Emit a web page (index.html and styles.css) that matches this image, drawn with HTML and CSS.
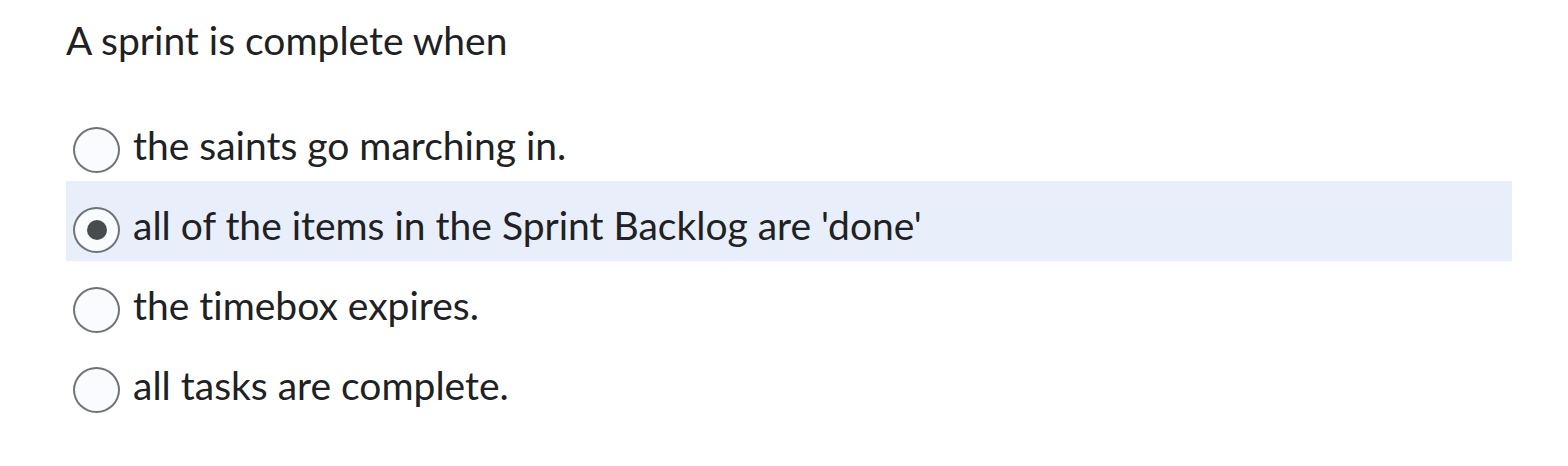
FILE: index.html
```html
<!DOCTYPE html>
<html>
<head>
<meta charset="utf-8">
<link rel="stylesheet" href="styles.css">
</head>
<body>
<div class="question">
  <div class="prompt">A sprint is complete when</div>
  <div class="options">
    <label class="option"><span class="radio"></span><span class="text">the saints go marching in.</span></label>
    <label class="option selected"><span class="radio checked"></span><span class="text">all of the items in the Sprint Backlog are 'done'</span></label>
    <label class="option"><span class="radio"></span><span class="text">the timebox expires.</span></label>
    <label class="option"><span class="radio"></span><span class="text">all tasks are complete.</span></label>
  </div>
</div>
</body>
</html>
```
FILE: styles.css
```css
html, body {
  margin: 0;
  padding: 0;
  background: #ffffff;
}
body {
  font-family: Lato, "Liberation Sans", sans-serif;
  color: #202122;
  font-variant-ligatures: none;
}
.question {
  padding: 17px 56px 0 66px;
  width: 1446px;
}
.prompt {
  font-size: 39px;
  line-height: 46px;
  margin-bottom: 38px;
}
.options {
  display: flex;
  flex-direction: column;
}
.option {
  box-sizing: border-box;
  display: flex;
  align-items: flex-start;
  height: 80px;
  padding: 21px 0 0 7px;
  gap: 13px;
  font-size: 39px;
}
.option.selected {
  background: #e8effb;
}
.radio {
  box-sizing: border-box;
  width: 47px;
  height: 46px;
  margin-top: 5px;
  border: 2px solid #6e7377;
  border-radius: 50%;
  background: #f9fbff;
  display: flex;
  align-items: center;
  justify-content: center;
  flex: none;
}
.radio.checked::after {
  content: "";
  width: 20px;
  height: 20px;
  border-radius: 50%;
  background: #494c4e;
}
.text {
  line-height: 46px;
}
```
